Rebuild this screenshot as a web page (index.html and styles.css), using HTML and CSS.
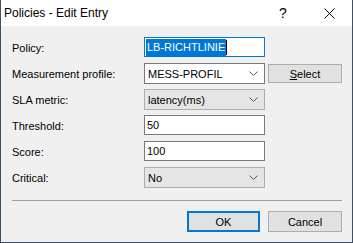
FILE: index.html
```html
<!DOCTYPE html>
<html lang="en">
<head>
    <meta charset="UTF-8">
    <title>Policies - Edit Entry</title>
    <link rel="stylesheet" href="styles.css">
</head>
<body>
    <div class="window">
        <div class="titlebar">
            <span class="title">Policies - Edit Entry</span>
            <span class="cap help">?</span>
            <span class="cap close">
                <svg width="11" height="11" viewBox="0 0 11 11"><path d="M0.5 0.5L10.5 10.5M10.5 0.5L0.5 10.5" stroke="#000" stroke-width="1" fill="none"/></svg>
            </span>
        </div>
        <div class="content">
            <div class="form">
                <label>Policy:</label>
                <div class="field focused"><span class="selected">LB-RICHTLINIE</span><span class="caret"></span></div>
                <div></div>

                <label>Measurement profile:</label>
                <div class="combo">
                    <span>MESS-PROFIL</span>
                    <svg class="chev" width="9" height="5" viewBox="0 0 9 5"><polyline points="0.5,0.5 4.5,4.5 8.5,0.5" stroke="#555" fill="none"/></svg>
                </div>
                <button class="btn small"><u>S</u>elect</button>

                <label>SLA metric:</label>
                <div class="combo list">
                    <span>latency(ms)</span>
                    <svg class="chev" width="9" height="5" viewBox="0 0 9 5"><polyline points="0.5,0.5 4.5,4.5 8.5,0.5" stroke="#555" fill="none"/></svg>
                </div>
                <div></div>

                <label>Threshold:</label>
                <div class="field">50</div>
                <div></div>

                <label>Score:</label>
                <div class="field">100</div>
                <div></div>

                <label>Critical:</label>
                <div class="combo list">
                    <span>No</span>
                    <svg class="chev" width="9" height="5" viewBox="0 0 9 5"><polyline points="0.5,0.5 4.5,4.5 8.5,0.5" stroke="#555" fill="none"/></svg>
                </div>
                <div></div>
            </div>
            <div class="sep"></div>
            <div class="actions">
                <button class="btn default">OK</button>
                <button class="btn">Cancel</button>
            </div>
        </div>
    </div>
</body>
</html>
```

FILE: styles.css
```css
body {
    margin: 0;
    background: #fff;
    font-family: "Liberation Sans", Arial, sans-serif;
    color: #000;
}
.window {
    width: 353px;
    height: 243px;
    box-sizing: border-box;
    border: 1px solid #3d5064;
    border-top: none;
    background: #f0f0f0;
}
.titlebar {
    height: 26px;
    background: #fff;
    display: flex;
    align-items: center;
}
.title {
    flex: 1;
    padding-left: 3px;
    font-size: 12px;
}
.cap {
    width: 46px;
    height: 26px;
    display: flex;
    align-items: center;
    justify-content: center;
}
.help {
    font-size: 14px;
}
.content {
    padding: 11px 10px 0 11px;
}
.form {
    display: grid;
    grid-template-columns: 129px 121px 74px;
    column-gap: 3px;
    grid-auto-rows: 21px;
    row-gap: 5px;
    font-size: 11px;
}
.form label {
    align-self: center;
}
.field {
    height: 20px;
    box-sizing: border-box;
    border: 1px solid #7a7a7a;
    background: #fff;
    padding-left: 2px;
    display: flex;
    align-items: center;
}
.field.focused {
    border-color: #0078d7;
    padding-left: 1px;
}
.selected {
    background: #0078d7;
    color: #fff;
    padding: 2px 1px 3px 1px;
}
.caret {
    width: 1px;
    height: 15px;
    background: #000;
}
.combo {
    height: 21px;
    box-sizing: border-box;
    border: 1px solid #7a7a7a;
    background: #fff;
    padding: 0 6px 0 3px;
    display: flex;
    align-items: center;
    justify-content: space-between;
}
.combo.list {
    background: #e5e5e5;
    border-color: #adadad;
}
.btn {
    width: 74px;
    height: 21px;
    box-sizing: border-box;
    border: 1px solid #adadad;
    background: #e1e1e1;
    font-family: inherit;
    font-size: 11px;
    color: #000;
    padding: 0;
}
.btn.small {
    height: 19px;
    align-self: center;
}
.btn.default {
    width: 73px;
    border: 2px solid #0078d7;
}
.sep {
    margin-top: 12px;
    height: 1px;
    background: #a0a0a0;
}
.actions {
    margin-top: 10px;
    display: flex;
    justify-content: flex-end;
    gap: 8px;
}
```
